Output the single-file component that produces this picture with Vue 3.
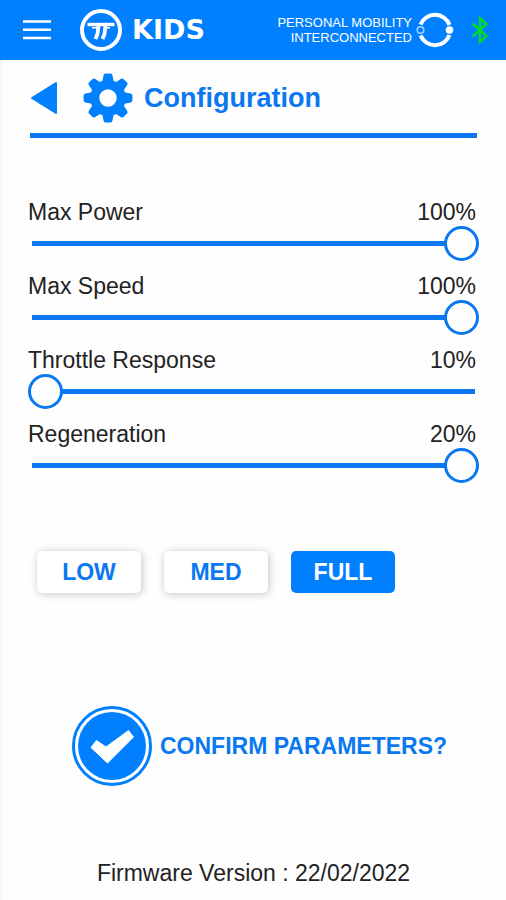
<template>
  <div class="app">
    <header class="topbar">
      <button class="icon-button" type="button" aria-label="Menu">
        <svg width="28" height="22" viewBox="0 0 28 22" stroke="#fff" stroke-width="2.6">
          <path d="M0 2.5h28M0 10.8h28M0 19h28" />
        </svg>
      </button>

      <div class="brand">
        <svg width="42" height="44" viewBox="0 0 42 44" fill="none" stroke="#fff">
          <circle cx="21" cy="22" r="19" stroke-width="4" />
          <path d="M7.500 16.500h27" stroke-width="3.400" />
          <path d="M12 19.800h6M24 19.800h6" stroke-width="1.400" />
          <path d="M18.500 17.500l-1 8.500-2 5M25.500 17.500l-1 8.500-2 5" stroke-width="3.800" />
        </svg>
        <span class="brand-name">KIDS</span>
      </div>

      <p class="slogan">PERSONAL MOBILITY<br />INTERCONNECTED</p>

      <svg class="ring" width="38" height="38" viewBox="0 0 38 38" fill="none">
        <path
          d="M4.600 13.500A15.500 15.500 0 0 1 33.500 14M4.600 24.500A15.500 15.500 0 0 0 33.500 24"
          stroke="#fff"
          stroke-width="4"
        />
        <circle cx="4.500" cy="19" r="3.300" stroke="#9fd0ff" stroke-width="1.600" />
        <circle cx="33.500" cy="19" r="3.800" fill="#fff" />
      </svg>

      <svg width="18" height="28" viewBox="0 0 18 28" fill="none" stroke="#00dc28" stroke-width="2.400">
        <path d="M1.500 7.500l14 12.500-6.500 6V2l6.500 6-14 12.500" />
      </svg>
    </header>

    <main class="page">
      <div class="title-row">
        <button class="icon-button" type="button" aria-label="Back">
          <svg width="28" height="34" viewBox="0 0 28 34">
            <path
              d="M26 2v30L2 17z"
              fill="#0080ff"
              stroke="#0080ff"
              stroke-width="2"
              stroke-linejoin="round"
            />
          </svg>
        </button>
        <svg class="gear" width="50" height="50" viewBox="-25 -25 50 50" fill="#0080ff">
          <path
            v-for="angle in toothAngles"
            :key="angle"
            :transform="`rotate(${angle})`"
            d="M-7-15.500l1.500-2 1-5q.4-1.900 2-1.900h5q1.600 0 2 1.900l1 5 1.500 2z"
          />
          <circle r="13.200" fill="none" stroke="#0080ff" stroke-width="9" />
        </svg>
        <h1>Configuration</h1>
      </div>

      <section class="settings">
        <div v-for="item in settings" :key="item.id" class="setting">
          <div class="setting-head">
            <label :for="item.id">{{ item.label }}</label>
            <output :for="item.id">{{ item.value }}%</output>
          </div>
          <input
            :id="item.id"
            v-model.number="item.value"
            type="range"
            :min="item.min"
            :max="item.max"
          />
        </div>
      </section>

      <div class="modes">
        <button
          v-for="name in modes"
          :key="name"
          type="button"
          class="mode"
          :class="{ active: name === mode }"
          @click="mode = name"
        >
          {{ name }}
        </button>
      </div>

      <button class="confirm" type="button">
        <svg width="80" height="80" viewBox="0 0 80 80">
          <circle cx="40" cy="40" r="38.500" fill="#fff" stroke="#0080ff" stroke-width="3" />
          <circle cx="40" cy="40" r="34" fill="#0080ff" />
          <path
            d="M19 41.500l5.500-7L34 41 56.500 24.500l5 6.500L35.500 57z"
            fill="#fff"
            stroke="#fff"
            stroke-linejoin="round"
          />
        </svg>
        <span>CONFIRM PARAMETERS?</span>
      </button>

      <p class="firmware">Firmware Version : 22/02/2022</p>
    </main>
  </div>
</template>

<script setup>
import { reactive, ref } from "vue";

const toothAngles = [0, 45, 90, 135, 180, 225, 270, 315];

const settings = reactive([
  { id: "max-power", label: "Max Power", min: 0, max: 100, value: 100 },
  { id: "max-speed", label: "Max Speed", min: 0, max: 100, value: 100 },
  { id: "throttle", label: "Throttle Response", min: 10, max: 100, value: 10 },
  { id: "regeneration", label: "Regeneration", min: 0, max: 20, value: 20 },
]);

const modes = ["LOW", "MED", "FULL"];
const mode = ref("FULL");
</script>

<style>
body {
  margin: 0;
  background: #fefefe;
}
</style>

<style scoped>
.app {
  display: flex;
  flex-direction: column;
  min-height: 100vh;
  font-family: "Liberation Sans", Arial, sans-serif;
  font-size: 23px;
  line-height: 26px;
  color: #222;
}

button {
  padding: 0;
  border: 0;
  background: none;
  font: inherit;
  cursor: pointer;
}

svg {
  display: block;
  flex-shrink: 0;
}

.topbar {
  display: flex;
  align-items: center;
  height: 60px;
  padding: 0 17px 0 23px;
  background: #0080ff;
  color: #fff;
}

.brand {
  display: flex;
  align-items: center;
  gap: 10px;
  margin-left: 29px;
}

.brand-name {
  font-family: "DejaVu Sans", sans-serif;
  font-size: 27px;
  font-weight: bold;
}

.slogan {
  margin: 0 4px 0 auto;
  font-size: 13px;
  line-height: 15px;
  text-align: right;
  white-space: nowrap;
}

.ring {
  margin-right: 17px;
}

.page {
  flex: 1;
  display: flex;
  flex-direction: column;
  padding: 13px 27px 14px 26px;
  border-left: 2px solid #f7f7f7;
}

.title-row {
  display: flex;
  align-items: center;
  margin: 0 2px;
  padding-bottom: 10px;
  border-bottom: 5px solid #0a78f0;
}

.gear {
  margin: 0 11px 0 25px;
}

h1 {
  margin: 0;
  font-size: 27px;
  line-height: 32px;
  color: #0a78f0;
}

.settings {
  display: flex;
  flex-direction: column;
  gap: 12px;
  margin-top: 61px;
}

.setting-head {
  display: flex;
  justify-content: space-between;
  margin-bottom: 1px;
  padding-right: 3px;
}

input[type="range"] {
  appearance: none;
  display: block;
  width: 100%;
  height: 35px;
  margin: 0;
  background: linear-gradient(#0a78f0, #0a78f0) center / calc(100% - 8px) 5px
    no-repeat;
  cursor: pointer;
}

input[type="range"]::-webkit-slider-thumb {
  appearance: none;
  box-sizing: border-box;
  width: 35px;
  height: 35px;
  border: 3px solid #0a78f0;
  border-radius: 50%;
  background: #fefefe;
}

.modes {
  display: flex;
  gap: 23px;
  margin: 68px 0 0 9px;
}

.mode {
  width: 104px;
  height: 42px;
  border-radius: 5px;
  background: #fff;
  box-shadow: 1px 1px 9px rgba(0, 0, 0, 0.24);
  font-weight: bold;
  color: #0a78f0;
}

.mode.active {
  background: #0080ff;
  box-shadow: none;
  color: #fff;
}

.confirm {
  display: flex;
  align-items: center;
  align-self: flex-start;
  gap: 8px;
  margin: 113px 0 0 44px;
  font-weight: bold;
  color: #0a78f0;
  white-space: nowrap;
}

.firmware {
  margin: auto 0 0;
  text-align: center;
}
</style>
